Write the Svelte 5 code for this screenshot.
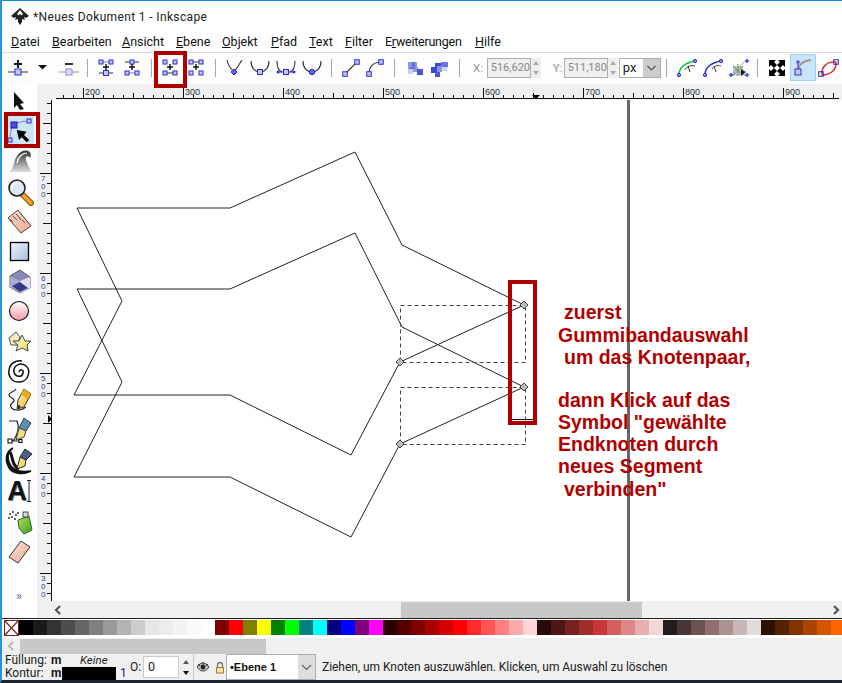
<script>
  const menu = [
    ['', 'D', 'atei'], ['', 'B', 'earbeiten'], ['', 'A', 'nsicht'], ['', 'E', 'bene'], ['', 'O', 'bjekt'],
    ['', 'P', 'fad'], ['', 'T', 'ext'], ['', 'F', 'ilter'], ['E', 'r', 'weiterungen'], ['', 'H', 'ilfe']
  ];
  const palette = [
    '#000000','#1a1a1a','#333333','#4d4d4d','#666666','#808080','#999999','#b3b3b3','#cccccc','#e6e6e6','#ececec','#f2f2f2','#f9f9f9','#ffffff',
    '#800000','#ff0000','#808000','#ffff00','#008000','#00ff00','#008080','#00ffff','#000080','#0000ff','#800080','#ff00ff',
    '#2b0000','#550000','#800000','#aa0000','#d40000','#ff0000','#ff2a2a','#ff5555','#ff8080','#ffaaaa','#ffd5d5',
    '#280b0b','#501616','#782121','#a02c2c','#c83737','#d35f5f','#de8787','#e9afaf','#f4d7d7',
    '#241c1c','#483737','#6c5353','#916f6f','#ac9393','#c8b7b7','#e3dbdb',
    '#2b1100','#552200','#803300','#aa4400','#d45500','#ff6600'
  ];
  const hTicks = Array.from({ length: 78 }, (_, i) => 11 + i * 10);
  const hLabels = [[31,'200'],[131,'300'],[231,'400'],[331,'500'],[431,'600'],[531,'700'],[631,'800'],[731,'900']];
  const vTicks = Array.from({ length: 50 }, (_, i) => 3 + i * 10);
  const vLabels = [[73,'700'],[173,'600'],[273,'500'],[373,'400'],[473,'300']];
  const paths = [
    '230,208 355,152 402,245 524,305 400,362 351,455 230,395 74,395 122,301 77,208 230,208',
    '230,289 355,233 402,327 524,387 400,444 351,537 230,477 74,477 122,382 77,289 230,289'
  ];
  const nodes = [[524,305],[524,387],[400,362],[400,444]];
  const lines = [
    [564,319,'zuerst'],[558,342,'Gummibandauswahl'],[564,364,'um das Knotenpaar,'],
    [558,407,'dann Klick auf das'],[558,429,'Symbol "gewählte'],[558,451,'Endknoten durch'],
    [558,473,'neues Segment'],[564,496,'verbinden"']
  ];
</script>

{#snippet sq(x, y, s = 5, c = 'n')}
  <rect class={c} x={x - s / 2} y={y - s / 2} width={s} height={s} />
{/snippet}
{#snippet plus(x, y)}
  <path class="plus" d="M{x - 3} {y}h6M{x} {y - 3}v6" />
{/snippet}

<svg class="defs" width="0" height="0" aria-hidden="true">
  <defs>
    <linearGradient id="gWave" x1="0" y1="0" x2="0" y2="1"><stop offset="0" stop-color="#333" /><stop offset="1" stop-color="#ddd" /></linearGradient>
    <linearGradient id="gRect" x1="0" y1="0" x2="1" y2="1"><stop offset="0" stop-color="#eef3f9" /><stop offset="1" stop-color="#a9c1dc" /></linearGradient>
    <linearGradient id="gBall" x1="0" y1="0" x2="0" y2="1"><stop offset="0" stop-color="#ffffff" /><stop offset="1" stop-color="#f09aa8" /></linearGradient>
    <linearGradient id="gRule" x1="0" y1="0" x2="1" y2="1"><stop offset="0" stop-color="#f8d8c8" /><stop offset="1" stop-color="#eea98c" /></linearGradient>
    <linearGradient id="gErase" x1="0" y1="0" x2="1" y2="1"><stop offset="0" stop-color="#fbe3da" /><stop offset="1" stop-color="#eeaa90" /></linearGradient>
    <linearGradient id="gStar" x1="0" y1="0" x2="1" y2="1"><stop offset="0" stop-color="#fffde0" /><stop offset="1" stop-color="#f2dc50" /></linearGradient>
    <linearGradient id="gPen" x1="0" y1="0" x2="1" y2="1"><stop offset="0" stop-color="#fff6c0" /><stop offset="1" stop-color="#f0b020" /></linearGradient>
    <linearGradient id="gGreen" x1="0" y1="0" x2="1" y2="1"><stop offset="0" stop-color="#b5e26a" /><stop offset="1" stop-color="#3d9a20" /></linearGradient>
  </defs>
</svg>

<div class="window">
  <header class="title">
    <svg width="18" height="18" viewBox="0 0 18 18">
      <path d="M9 0L18 8L15 10L13 9L14 12L11 11L11 14L9 17L7 14L7 11L4 12L5 9L3 10L0 8Z" fill="#222" />
      <path d="M9 2L12 6L10.5 7.5L9 6L7.5 7.5L6 6Z" fill="#f4f4f4" />
    </svg>
    <span>*Neues Dokument 1 - Inkscape</span>
  </header>

  <nav class="menu">
    {#each menu as m}
      <span>{m[0]}<u>{m[1]}</u>{m[2]}</span>
    {/each}
  </nav>

  <div class="toolbar">
    <button class="tb g1"><svg viewBox="0 0 26 26"><path class="ln" d="M3 15h20" /><path class="plus big" d="M9 7h8M13 3v8" />{@render sq(13, 15, 6)}</svg></button>
    <button class="tb arrow"><svg viewBox="0 0 23 26"><path d="M7 8h9l-4.500 4.500z" fill="#111" /></svg></button>
    <button class="tb ml2"><svg viewBox="0 0 26 26"><path class="ln gr" d="M3 15h20" /><path d="M9 7h8" stroke="#333" stroke-width="2" />{@render sq(13, 15, 6, 'n lt')}</svg></button>
    <i class="sep s87"></i>
    <button class="tb"><svg viewBox="0 0 26 26"><path class="ln" d="M6 16h14" /><path class="ln blue" d="M9 5h8" />{@render sq(8, 5, 4)}{@render sq(18, 5, 4)}{@render plus(13, 10)}{@render sq(13, 16, 5)}</svg></button>
    <button class="tb"><svg viewBox="0 0 26 26"><path class="ln" d="M6 5h14" /><path class="ln blue" d="M8 16h10" />{@render sq(13, 5, 4)}{@render plus(13, 10)}{@render sq(8, 16, 4)}{@render sq(18, 16, 4)}</svg></button>
    <i class="sep s151"></i>
    <button class="tb"><svg viewBox="0 0 26 26">{@render sq(8, 5, 4)}{@render sq(18, 5, 4)}{@render plus(13, 10)}<path class="ln" d="M8 16h10" />{@render sq(8, 16, 4)}{@render sq(18, 16, 4)}</svg></button>
    <button class="tb"><svg viewBox="0 0 26 26"><path class="ln" d="M8 5h10" />{@render sq(8, 5, 4)}{@render sq(18, 5, 4)}{@render plus(13, 10)}{@render sq(8, 16, 4)}{@render sq(18, 16, 4)}</svg></button>
    <i class="sep s215"></i>
    <button class="tb"><svg viewBox="0 0 26 26"><path class="cv" d="M6 3C7 9 10 12 13 15C16 11 18 8 21 3" /><path d="M13 12L16 15L13 18L10 15Z" fill="#66f" stroke="#22c" /></svg></button>
    <button class="tb"><svg viewBox="0 0 26 26"><path class="cv" d="M4 4C4 11 8 15 13 15C18 15 22 11 22 4" />{@render sq(13, 15, 5)}</svg></button>
    <button class="tb"><svg viewBox="0 0 26 26"><path class="cv" d="M4 4C4 10 6 14 9 15M17 15C20 14 22 10 22 4" /><path d="M5 15h16" stroke="#22c" />{@render sq(13, 15, 5)}<circle cx="5" cy="15" r="1.5" fill="#33c" /><circle cx="21" cy="15" r="1.5" fill="#33c" /></svg></button>
    <button class="tb"><svg viewBox="0 0 26 26"><path class="cv" d="M4 4C4 11 8 15 13 15C18 15 22 11 22 4" /><circle cx="13" cy="15" r="2.7" fill="#66f" stroke="#22c" /></svg></button>
    <i class="sep s331"></i>
    <button class="tb nar"><svg viewBox="0 0 24 26"><path class="cv" d="M6 17L18 5" />{@render sq(6, 17, 4.5)}{@render sq(18, 5, 4.5)}</svg></button>
    <button class="tb nar"><svg viewBox="0 0 24 26"><path class="cv" d="M6 17C6 10 10 5 18 5" />{@render sq(6, 17, 4.5)}{@render sq(18, 5, 4.5)}</svg></button>
    <i class="sep s395"></i>
    <button class="tb nar"><svg viewBox="0 0 24 26"><path d="M5 5h7v7h-7z" fill="#8f96ec" /><path d="M9 5h5v5h-5zM7 10h8v5h-8z" fill="#4c57d8" opacity=".6" /><path d="M14 12h6v6h-6z" fill="#4c57d8" /><path d="M5 12h5v5h-5z" fill="#c9cdf5" /></svg></button>
    <button class="tb nar"><svg viewBox="0 0 24 26"><path d="M8 6h6v5h-6zM4 10h6v6h-6z" fill="#3a48dd" /><path d="M14 5h7v5h-7z" fill="#3a48dd" opacity=".75" /><path d="M10 9h5v6h-5z" fill="#8d95ec" /><path d="M8 15h5v5h-5z" fill="#4c57d8" /><path d="M15 10h5v4h-5z" fill="#d0d3f5" /></svg></button>
    <i class="sep s460"></i>

    <span class="coord first">X:</span>
    <div class="num">516,620</div>
    <div class="spin"><b></b><s></s></div>
    <span class="coord second">Y:</span>
    <div class="num">511,180</div>
    <div class="spin"><b></b><s></s></div>
    <div class="unit"><span>px</span><em><svg width="17" height="18" viewBox="0 0 17 18"><path d="M4.500 7l4 4 4-4" fill="none" stroke="#555" stroke-width="1.2" /></svg></em></div>

    <i class="sep s669"></i>
    <button class="tb"><svg viewBox="0 0 26 26"><path d="M5 18C5 11 10 6 21 4" fill="none" stroke="#0c3" stroke-width="1.5" /><path d="M11 13C13 9 17 8 21 9M14 9l2 6" fill="none" stroke="#333" /><circle cx="5" cy="18" r="1.6" class="dot" /><circle cx="21" cy="4" r="1.6" class="dot" /></svg></button>
    <button class="tb"><svg viewBox="0 0 26 26"><path d="M5 18C5 11 10 6 21 4" fill="none" stroke="#33c" stroke-width="1.5" /><path d="M12 12C14 9 17 8 21 9M14 9l2 6" fill="none" stroke="#444" /><circle cx="5" cy="18" r="1.6" class="dot" /><circle cx="21" cy="4" r="1.6" class="dot" /></svg></button>
    <button class="tb"><svg viewBox="0 0 26 26"><path d="M5 18L19 4M5 18H21" stroke="#777" stroke-dasharray="1.500 1" fill="none" /><path d="M7 9h10v9H7z" fill="#9a9" opacity=".65" /><path d="M7 9l10 9M17 9L7 18M12 7v11" stroke="#474" stroke-dasharray="1.500 1" /><path d="M15 12l5 3-5 4z" fill="#222" /><circle cx="5" cy="18" r="1.3" class="dot" /><circle cx="21" cy="4" r="1.3" class="dot" /><circle cx="21" cy="18" r="1.3" class="dot" /></svg></button>
    <i class="sep s759"></i>
    <button class="tb"><svg viewBox="0 0 26 26"><g fill="#000"><path d="M5 3h7l-2 2 3 3-3 3-3-3-2 2z" /><path d="M21 3v7l-2-2-3 3-3-3 3-3-2-2z" /><path d="M5 19v-7l2 2 3-3 3 3-3 3 2 2z" /><path d="M21 19h-7l2-2-3-3 3-3 3 3 2-2z" /></g></svg></button>
    <button class="tb active"><svg viewBox="0 -3 26 27"><path d="M8 15C8 8 12 4 21 3" fill="none" stroke="#999" stroke-width="2" /><path d="M8 5v10" stroke="#22c" /><circle cx="8" cy="5" r="1.8" fill="#55e" />{@render sq(8, 15, 6)}</svg></button>
    <button class="tb"><svg viewBox="0 0 26 26"><path d="M6 18C5 10 11 4 20 5M6 18C14 18 21 13 20 5" fill="none" stroke="#e22" stroke-width="1.4" />{@render sq(5, 17, 4.500, 'n bright')}{@render sq(20, 5, 4.500, 'n bright')}</svg></button>
  </div>

  <div class="workspace">
    <aside class="toolbox">
      <svg viewBox="0 0 30 30"><path d="M10 6L20 17L16 18L20 23L16 24L13 19L10 22Z" fill="#111" /></svg>
      <svg class="cur" viewBox="0 0 30 30"><path d="M6 24C6 15 8 9 10 9C14 6 20 5 25 5" fill="none" stroke="#88a" />{@render sq(10, 9, 6, 'n dk')}{@render sq(25, 5, 4, 'n')}{@render sq(6, 24, 4, 'n')}<path d="M12.700 14L22.700 15.700L20 19L25.300 24L22.700 26.300L17.700 21.300L15 24Z" fill="#000" /></svg>
      <svg viewBox="0 0 30 30"><path d="M5 26C8 24 9 20 10 17C12 9 18 3 24 5C27 6 28 10 26 12C24 9 21 10 22 14C23 18 26 22 27 26Z" fill="url(#gWave)" /><path d="M13 17C14 11 18 7 23 7" fill="none" stroke="#fff" stroke-width="1.2" /></svg>
      <svg viewBox="0 0 30 30"><path d="M19 19L27 27" stroke="#8a5a10" stroke-width="6" stroke-linecap="round" /><path d="M19 19L27 27" stroke="#f3a22b" stroke-width="3.500" stroke-linecap="round" /><circle cx="13" cy="12" r="8" fill="#dce9f5" stroke="#222" stroke-width="1.6" /><path d="M8 12a5 5 0 0 1 5-5" stroke="#fff" stroke-width="2" fill="none" /></svg>
      <svg viewBox="0 0 30 30"><path d="M4 12L14 4L27 20L17 27Z" fill="url(#gRule)" stroke="#444" /><path d="M6 13l3 3M9 10l4 4M12 8l3 3M15 11l2 3M18 14l3 3" stroke="#555" /></svg>
      <svg viewBox="0 0 30 30"><rect x="6.500" y="6.500" width="18" height="18" fill="url(#gRect)" stroke="#000" stroke-width="1.3" /></svg>
      <svg viewBox="0 0 30 30"><path d="M6 10L16 4L26 11V22L16 27L6 21Z" fill="#8a8ab8" stroke="#555" /><path d="M6 10L16 15V27L6 21Z" fill="#aaaacc" /><path d="M16 15L26 11V22L16 27Z" fill="#e0e0ee" /><path d="M8 20L16 16L24 22L16 26Z" fill="#37378a" /></svg>
      <svg viewBox="0 0 30 30"><circle cx="15" cy="15" r="9.500" fill="url(#gBall)" stroke="#111" stroke-width="1.1" /></svg>
      <svg viewBox="0 0 30 30"><path d="M5 12L12 6L16 11L13 19L7 19Z" fill="#f3ecbc" stroke="#555" /><path d="M18 9L21 15L27 15L23 19L24 25L18 22L12 25L14 19L9 15L15 15Z" fill="url(#gStar)" stroke="#444" /></svg>
      <svg viewBox="0 0 30 30"><path d="M15 16C16 12 20 14 19 17C18 22 11 21 10 16C9 9 17 6 22 10C27 14 25 25 16 26C8 27 4 20 5 14C6 7 12 4 18 5" fill="none" stroke="#111" stroke-width="1.5" /></svg>
      <svg viewBox="0 0 30 30"><path d="M12 3C9 7 5 6 5 9C5 12 11 12 10 15C9 18 5 17 7 21C8 24 16 26 22 21" fill="none" stroke="#222" stroke-width="1.2" /><path d="M20 3L27 8L20 21L13 23L14 14Z" fill="url(#gPen)" stroke="#333" /><path d="M20 3L27 8L24 13L17 8Z" fill="#e8a818" /><path d="M13 23L14.500 18.500L17 21Z" fill="#222" /></svg>
      <svg viewBox="0 0 30 30"><path d="M5 5H13C15 10 14 16 12 20C10 24 10 24 8 25H15" fill="none" stroke="#222" stroke-width="1.2" /><rect x="4" y="23" width="4" height="4" fill="#fff" stroke="#000" /><rect x="15" y="23.500" width="3" height="3" fill="#fff" stroke="#000" /><path d="M20 2L27 7L22 15L15 12Z" fill="#5a8fb3" stroke="#345" /><path d="M15 12L22 15L20 21L12 24Z" fill="#f6dd80" stroke="#444" /></svg>
      <svg viewBox="0 0 30 30"><path d="M9 2C4 5 3 11 5 16C7 22 13 27 27 25C19 29 8 28 5 22C1 15 1 6 9 2Z" fill="#111" stroke="#111" stroke-width="1.500" /><path d="M6 6C8 9 8 14 10 18C11 20 13 22 15 23" fill="none" stroke="#111" stroke-width="3" /><path d="M21 3L28 8L22 14L16 11Z" fill="#4a5f8a" stroke="#223" /><path d="M16 11L22 14L21 20L13 23Z" fill="#f6da70" stroke="#222" /></svg>
      <div class="letter"><span>A</span><svg class="ibeam" width="4" height="22" viewBox="0 0 4 22"><path d="M0 .5h4M2 0v22M0 21.500h4" stroke="#222" /></svg></div>
      <svg viewBox="0 0 30 30"><g fill="#333"><circle cx="6" cy="8" r="1" /><circle cx="9" cy="6" r="1" /><circle cx="12" cy="9" r="1" /><circle cx="8" cy="11" r="1" /><circle cx="11" cy="13" r="1" /><circle cx="14" cy="7" r="1" /><circle cx="5" cy="12" r="1" /></g><path d="M14 14L25 10L28 24L20 28L15 22Z" fill="url(#gGreen)" stroke="#2a6d10" /><rect x="19" y="6" width="5" height="5" fill="#ddd" stroke="#444" /></svg>
      <svg viewBox="0 0 30 30"><path d="M17 5L26 11L14 27L5 21Z" fill="url(#gErase)" stroke="#333" /></svg>
      <span class="more">»</span>
    </aside>

    <div class="canvas-col">
      <svg class="hruler" width="790" height="16" viewBox="0 0 790 16">
        <path class="rl" d="M4 14.500H787" />
        {#each hTicks as t, i}
          <path class="rl" d="M{t + .5} 15V{(i + 8) % 10 === 0 ? 4 : (i + 8) % 5 === 0 ? 9 : 11}" />
        {/each}
        {#each hLabels as l}<text class="rtext" x={l[0] + 2} y="11">{l[1]}</text>{/each}
        <path d="M480 11h8l-4 4z" fill="#000" />
      </svg>
      <div class="canvas-row">
        <svg class="vruler" width="15" height="501" viewBox="0 0 15 501">
          <path class="rl" d="M14.500 0V501" />
          {#each vTicks as t, i}
            <path class="rl" d="M15 {t + .5}H{(i + 3) % 10 === 0 ? 3 : (i + 3) % 5 === 0 ? 6 : 10}" />
          {/each}
          {#each vLabels as l}
            {#each l[1].split('') as d, k}
              <text class="rtext v" x="4" y={l[0] + 8 + k * 8}>{d}</text>
            {/each}
          {/each}
          <path d="M11 315l4 4-4 4z" fill="#000" />
        </svg>
        <svg class="canvas" width="790" height="501" viewBox="52 100 790 501">
          <rect x="627" y="100" width="3" height="501" fill="#666" />
          {#each paths as p}<polyline points={p} class="shape" />{/each}
          <path class="dash" d="M400.500 305.500H525.500V362.500H400.500ZM400.500 387.500H525.500V444.500H400.500Z" />
          {#each nodes as n}<path class="node" d="M{n[0]} {n[1] - 4}l4 4-4 4-4-4z" />{/each}
          <path d="M512 419.500H534" stroke="#111" fill="none" />
          <rect x="510" y="282" width="25" height="141" class="mark" />
          {#each lines as l}<text class="note" x={l[0]} y={l[1]}>{l[2]}</text>{/each}
        </svg>
      </div>
      <div class="hscroll">
        <svg class="chev" width="12" height="12" viewBox="0 0 12 12"><path d="M8 2L4 6l4 4" /></svg>
        <div class="track"><div class="thumb"></div></div>
        <svg class="chev" width="12" height="12" viewBox="0 0 12 12"><path d="M4 2l4 4-4 4" /></svg>
      </div>
    </div>
  </div>

  <div class="palette">
    <svg class="none" width="15" height="16" viewBox="0 0 15 16"><path d="M.5.5h14v15H.5zM.5.5l14 15M14.500.5L.5 15.500" fill="#fff" stroke="#7a2020" stroke-width="1.1" /></svg>
    {#each palette as c}<i style="background:{c}"></i>{/each}
  </div>

  <div class="pscroll">
    <svg class="chev light" width="10" height="12" viewBox="0 0 10 12"><path d="M7 2L3 6l4 4" /></svg>
    <div class="pthumb"></div>
  </div>

  <footer class="status">
    <div class="fs">
      <div class="fs-row"><span class="k1">Füllung:</span><b>m</b><em>Keine</em></div>
      <div class="fs-row"><span class="k2">Kontur:</span><b>m</b><i class="swatch"></i><span class="w">1</span></div>
    </div>
    <span class="o">O:</span>
    <div class="opacity">0</div>
    <div class="ospin"><b></b><s></s></div>
    <i class="sep2"></i>
    <svg class="eye" width="14" height="12" viewBox="0 0 14 12"><path d="M1 6C3 3 5 2 7 2S11 3 13 6C11 9 9 10 7 10S3 9 1 6Z" fill="#bbb" stroke="#444" /><circle cx="7" cy="6" r="2.400" fill="#222" /><path d="M2 3l2 2M7 1v2M12 3l-2 2" stroke="#333" /></svg>
    <svg class="lock" width="12" height="13" viewBox="0 0 12 13"><rect x="2.500" y="6.500" width="7" height="5.500" fill="#f4e6a8" stroke="#9a8430" /><path d="M3.500 6V4a2.500 2.500 0 0 1 5 0v2" fill="none" stroke="#777" stroke-width="1.3" /></svg>
    <div class="layer"><span>•Ebene 1</span><em><svg width="17" height="24" viewBox="0 0 17 24"><path d="M4 10l4.500 4.500 4.500-4.500" fill="none" stroke="#666" stroke-width="1.2" /></svg></em></div>
    <span class="msg">Ziehen, um Knoten auszuwählen. Klicken, um Auswahl zu löschen</span>
  </footer>

  <div class="frame f-tool"></div>
  <div class="frame f-btn"></div>
</div>

<style>
  :global(body) { margin: 0; background: #fff; }
  .defs { position: absolute; }
  .window {
    position: relative;
    width: 842px; height: 683px; box-sizing: border-box;
    display: flex; flex-direction: column; overflow: hidden;
    border-top: 1px solid #0f85d8; border-left: 2px solid #2a8fdc;
    border-bottom: 3px solid #1d2630;
    background: #fff;
    font: 12px/16px Roboto, "Liberation Sans", sans-serif; color: #1a1a1a;
  }
  .title { height: 31px; flex: none; display: flex; align-items: center; gap: 4px; padding-left: 9px; color: #222; font-size: 12px; }
  .title span { letter-spacing: .03em; }
  .title svg { flex: none; }
  .menu { height: 20px; flex: none; display: flex; align-items: center; padding-left: 9px; color: #111; font-size: 12.500px; }
  .menu span:nth-child(1) { width: 41px; }
  .menu span:nth-child(2) { width: 70px; }
  .menu span:nth-child(3) { width: 54px; }
  .menu span:nth-child(4) { width: 46px; }
  .menu span:nth-child(5) { width: 49px; }
  .menu span:nth-child(6) { width: 38px; }
  .menu span:nth-child(7) { width: 36px; }
  .menu span:nth-child(8) { width: 40px; }
  .menu span:nth-child(9) { width: 90px; letter-spacing: -.02em; }
  .toolbar {
    height: 32px; flex: none; box-sizing: border-box; padding: 4px 0 0 3px;
    border-top: 1px solid #dcdcdc; display: flex; align-items: flex-start; background: #fdfdfd;
  }
  .tb { all: unset; display: block; flex: none; width: 26px; height: 26px; box-sizing: border-box; }
  .tb svg { display: block; width: 100%; height: 100%; }
  .tb.arrow { width: 23px; }
  .tb.ml2 { margin-left: 2px; }
  .tb.nar { width: 24px; }
  .tb.active { margin-top: -3px; height: 27px; background: #cce4f7; box-shadow: inset 0 0 0 1px #99d1ff; }
  .sep { flex: none; display: block; width: 1px; height: 18px; margin-top: 2px !important; background: #a8a8a8; }
  .s87 { margin: 0 5px; }
  .s151, .s215 { margin: 0 5px 0 6px; }
  .s331 { margin: 0 7px 0 6px; }
  .s395 { margin: 0 8px 0 7px; }
  .s460 { margin: 0 0 0 8px; }
  .s669 { margin: 0 7px 0 5px; }
  .s759 { margin: 0 6px 0 5px; }
  .coord { color: #999; font-size: 11.500px; line-height: 20px; margin-top: 1px; }
  .coord.first { margin-left: 13px; width: 14px; }
  .coord.second { margin-left: 12px; width: 11px; }
  .num {
    width: 45px; height: 20px; margin-top: 1px; box-sizing: border-box; border: 1px solid #adadad; background: #f0f0f0;
    color: #888; font-size: 11px; line-height: 18px; padding-left: 3px; white-space: nowrap;
  }
  .spin { width: 10px; height: 20px; margin-top: 1px; display: flex; flex-direction: column; align-items: center; justify-content: space-around; background: #efefef; }
  .spin b, .ospin b { width: 0; height: 0; border: 3.500px solid transparent; border-top: 0; border-bottom: 4px solid #aaa; }
  .spin s, .ospin s { width: 0; height: 0; border: 3.500px solid transparent; border-bottom: 0; border-top: 4px solid #aaa; }
  .unit { margin: 1px 0 0 1px; width: 43px; height: 20px; box-sizing: border-box; border: 1px solid #adadad; background: #fff; display: flex; font-size: 13px; line-height: 18px; color: #222; }
  .unit span { flex: 1; padding-left: 3px; }
  .unit em { width: 17px; background: #ccc; }
  .workspace { height: 534px; flex: none; display: flex; }
  .toolbox { width: 35px; flex: none; box-sizing: border-box; padding: 2px 0 0 2px; display: flex; flex-direction: column; background: #fff; }
  .toolbox > svg, .letter { flex: none; width: 30px; height: 30px; }
  .toolbox > svg.cur { background: #cce4f7; }
  .letter { display: flex; align-items: center; justify-content: center; }
  .letter span { font: 700 27px/30px "Liberation Sans", sans-serif; color: #111; text-shadow: 1px 1px 0 #777; }
  .more { margin-top: 23px; height: 14px; text-align: center; width: 30px; color: #6668aa; font-size: 13px; line-height: 14px; }
  .canvas-col { width: 805px; flex: none; display: flex; flex-direction: column; background: #f0f0f0; }
  .hruler { display: block; flex: none; margin-left: 15px; }
  .canvas-row { display: flex; height: 501px; flex: none; }
  .vruler { display: block; flex: none; }
  .canvas { display: block; flex: none; background: #fff; }
  .rl { stroke: #111; stroke-width: 1; fill: none; }
  .rtext { font: 9px "Liberation Sans", sans-serif; fill: #234; }
  .rtext.v { font-size: 8px; fill: #2b4a88; }
  .shape { fill: none; stroke: #222; stroke-width: 1; }
  .dash { fill: none; stroke: #444; stroke-width: 1; stroke-dasharray: 4 3; }
  .node { fill: #bbb; stroke: #444; stroke-width: 1; }
  .mark { fill: none; stroke: #ac0000; stroke-width: 4; }
  .note { font: 700 19.500px "Liberation Sans", sans-serif; fill: #b00000; }
  .hscroll { height: 17px; flex: none; display: flex; align-items: center; padding-left: 15px; }
  .chev { flex: none; fill: none; stroke: #555; stroke-width: 2.200; }
  .chev.light { stroke: #bbb; }
  .track { width: 766px; height: 16px; margin: 0 4px; position: relative; }
  .thumb { position: absolute; left: 333px; width: 241px; top: 0; bottom: 0; background: #c8c8c8; }
  .palette { height: 18px; flex: none; box-sizing: border-box; border-top: 1px solid #222; padding: 1px 0 0 2px; display: flex; background: #fff; overflow: hidden; }
  .palette .none { flex: none; }
  .palette i { flex: none; width: 14px; height: 15px; }
  .pscroll { height: 18px; flex: none; box-sizing: border-box; border-top: 2px solid #fff; background: #f0f0f0; display: flex; align-items: center; padding-left: 4px; }
  .pscroll .chev { margin-right: 4px; }
  .pthumb { width: 246px; height: 15px; background: #c8c8c8; }
  .status { flex: 1; min-height: 0; display: flex; align-items: center; background: #f0f0f0; padding-left: 3px; font-size: 12px; }
  .fs { width: 122px; flex: none; font-size: 12px; }
  .fs-row { height: 13px; line-height: 13px; position: relative; white-space: nowrap; }
  .fs-row b { position: absolute; left: 46px; }
  .fs-row em { position: absolute; left: 75px; font-size: 11.500px; }
  .swatch { position: absolute; left: 57px; top: 0; width: 54px; height: 14px; background: #000; }
  .w { position: absolute; left: 115px; color: #23236a; }
  .o { margin-left: 3px; width: 13px; flex: none; }
  .opacity { width: 36px; height: 22px; box-sizing: border-box; background: #fff; border: 1px solid #ccc; line-height: 20px; padding-left: 4px; flex: none; font-size: 12.500px; }
  .ospin { width: 13px; height: 22px; display: flex; flex-direction: column; align-items: center; justify-content: space-around; flex: none; }
  .ospin b { border-bottom-color: #555; } .ospin s { border-top-color: #111; }
  .sep2 { width: 1px; height: 26px; background: #ccc; margin: 0 2px 0 1px; flex: none; }
  .eye { flex: none; }
  .lock { margin-left: 4px; flex: none; }
  .layer { width: 90px; height: 26px; box-sizing: border-box; border: 1px solid #adadad; background: #fff; display: flex; flex: none; }
  .layer span { flex: 1; font: 700 11px/24px "Liberation Sans", sans-serif; color: #111; padding-left: 3px; }
  .layer em { width: 17px; background: #ddd; }
  .msg { margin-left: 6px; white-space: nowrap; font-size: 12px; letter-spacing: -.05px; color: #222; }
  .frame { position: absolute; box-sizing: border-box; border: 4px solid #ac0000; pointer-events: none; }
  .f-tool { left: 2px; top: 111px; width: 36px; height: 36px; }
  .f-btn { left: 152px; top: 50px; width: 33px; height: 37px; }
  .n { fill: #c5c8f5; stroke: #2c2ccf; stroke-width: 1; }
  .n.lt { fill: #dadcf8; stroke: #8a8ae8; }
  .n.dk { fill: #4e4ee0; stroke: #1a1ab0; }
  .n.bright { fill: none; stroke: #22c; }
  .ln { stroke: #333; stroke-width: 1; fill: none; }
  .ln.gr { stroke: #999; }
  .ln.blue { stroke: #7a7ae0; }
  .plus { stroke: #111; stroke-width: 1.400; fill: none; }
  .plus.big { stroke-width: 2; }
  .cv { fill: none; stroke: #333; stroke-width: 1.100; }
  .dot { fill: #99f; stroke: #22c; stroke-width: 1; }
</style>
